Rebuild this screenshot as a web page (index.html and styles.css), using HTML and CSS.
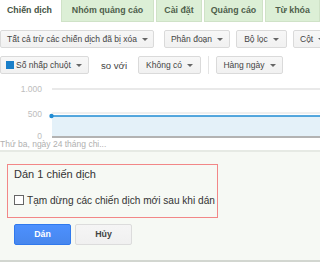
FILE: index.html
```html
<!DOCTYPE html>
<html>
<head>
<meta charset="utf-8">
<link rel="stylesheet" href="styles.css">
</head>
<body>
<div class="tabs">
  <div class="tab active t1">Chiến dịch</div>
  <div class="tab t2">Nhóm quảng cáo</div>
  <div class="tab t3">Cài đặt</div>
  <div class="tab t4">Quảng cáo</div>
  <div class="tab t5">Từ khóa</div>
  <div class="tab t6"></div>
</div>
<div class="toolbar r1">
  <div class="btn b-all">Tất cả trừ các chiến dịch đã bị xóa<span class="caret"></span></div>
  <div class="btn b-seg">Phân đoạn<span class="caret"></span></div>
  <div class="btn b-filter">Bộ lọc<span class="caret"></span></div>
  <div class="btn b-col">Cột<span class="caret"></span></div>
</div>
<div class="toolbar r2">
  <div class="btn b-metric"><span class="swatch"></span>Số nhấp chuột<span class="caret"></span></div>
  <div class="vs">so với</div>
  <div class="btn b-none">Không có<span class="caret"></span></div>
  <div class="sep"></div>
  <div class="btn b-daily">Hàng ngày<span class="caret"></span></div>
</div>
<svg class="chart" width="320" height="56" viewBox="0 0 320 56">
  <line x1="52" y1="5" x2="320" y2="5" stroke="#e2e2e2" stroke-width="1.5"/>
  <text x="42" y="8" text-anchor="end" class="lbl">1.000</text>
  <line x1="52" y1="29" x2="320" y2="29" stroke="#e0e0e0" stroke-width="1.2"/>
  <rect x="52" y="32" width="268" height="20" fill="#e4f1f9"/>
  <line x1="52" y1="32" x2="320" y2="32" stroke="#1f8bd3" stroke-width="1.6"/>
  <circle cx="51.5" cy="32" r="2.2" fill="#1f8bd3"/>
  <rect x="52" y="52" width="268" height="2" fill="#b3b3b3"/>
  <text x="42" y="33" text-anchor="end" class="lbl">500</text>
  <text x="42" y="54.5" text-anchor="end" class="lbl">0</text>
</svg>
<div class="date">Thứ ba, ngày 24 tháng chi...</div>
<div class="panel">
  <div class="box">
    <div class="title">Dán 1 chiến dịch</div>
    <label class="check"><span class="cb"></span>Tạm dừng các chiến dịch mới sau khi dán</label>
  </div>
  <div class="actions">
    <div class="abtn primary">Dán</div>
    <div class="abtn">Hủy</div>
  </div>
</div>
</body>
</html>
```
FILE: styles.css
```css
html, body {
  margin: 0;
  padding: 0;
  background: #ffffff;
  width: 320px;
  height: 264px;
  overflow: hidden;
  font-family: "Liberation Sans", Arial, sans-serif;
}

.tabs {
  display: flex;
  height: 22px;
  white-space: nowrap;
  overflow: hidden;
}

.tab {
  box-sizing: border-box;
  height: 22px;
  line-height: 21px;
  font-size: 8.8px;
  font-weight: bold;
  color: #4f5f4c;
  text-align: center;
  background: #dcefd6;
  border: 1px solid #cfe2c7;
  border-top: none;
  margin-left: 2px;
  flex: none;
}

.tab.active {
  background: #ffffff;
  border: none;
  color: #455445;
  margin-left: 0;
}

.t1 { width: 59px; }
.t2 { width: 93px; }
.t3 { width: 46px; }
.t4 { width: 59px; }
.t5 { width: 55px; }
.t6 { width: 20px; }

.toolbar {
  display: flex;
  align-items: center;
  height: 18px;
  margin-top: 8px;
  white-space: nowrap;
  overflow: hidden;
}

.btn {
  box-sizing: border-box;
  height: 18px;
  line-height: 16px;
  font-size: 8.5px;
  color: #444;
  background: linear-gradient(#f7f7f7, #f1f1f1);
  border: 1px solid #dadada;
  border-radius: 2px;
  padding: 0 6px;
  display: flex;
  align-items: center;
  flex: none;
}

.caret {
  display: inline-block;
  width: 0;
  height: 0;
  border-left: 3px solid transparent;
  border-right: 3px solid transparent;
  border-top: 3px solid #666;
  margin-left: 5px;
  margin-top: 1px;
}

.b-all { width: 154px; }
.b-seg { width: 66px; margin-left: 10px; justify-content: center; }
.b-filter { width: 51px; margin-left: 6px; justify-content: center; }
.b-col { width: 40px; margin-left: 6px; }

.b-metric { width: 89px; padding-left: 5px; }
.swatch {
  display: inline-block;
  width: 8px;
  height: 8px;
  background: #1a7fc9;
  margin-right: 2px;
}
.vs {
  font-size: 9.6px;
  color: #444;
  margin-left: 12px;
  width: 37px;
}
.b-none { width: 63px; justify-content: center; }
.sep {
  width: 1px;
  height: 18px;
  background: #e4e4e4;
  margin-left: 7px;
}
.b-daily { width: 67px; margin-left: 7px; justify-content: center; }

.chart {
  display: block;
  margin-top: 10px;
}

.lbl {
  font-family: "Liberation Sans", Arial, sans-serif;
  font-size: 8.5px;
  fill: #bdbdbd;
}

.date {
  height: 9px;
  line-height: 9px;
  font-size: 8.5px;
  color: #b0b0b0;
  white-space: nowrap;
}

.panel {
  box-sizing: border-box;
  margin-top: 1px;
  height: 112px;
  background: #f6f9f4;
  border-top: 2px solid #e6eae4;
  border-bottom: 2px solid #d2d6d0;
  padding-top: 12px;
  padding-left: 7px;
}

.box {
  box-sizing: border-box;
  width: 211px;
  height: 54px;
  border: 1.5px solid #f28787;
  padding: 2px 0 0 6px;
}

.title {
  font-size: 11px;
  line-height: 14px;
  color: #333;
  margin-bottom: 12px;
}

.check {
  display: flex;
  align-items: center;
  height: 14px;
  font-size: 10.1px;
  color: #333;
  white-space: nowrap;
}

.cb {
  box-sizing: border-box;
  width: 10px;
  height: 10px;
  border: 1px solid #666;
  background: #fff;
  margin-right: 3px;
  flex: none;
}

.actions {
  display: flex;
  margin-top: 6px;
  margin-left: 7px;
  gap: 4px;
}

.abtn {
  box-sizing: border-box;
  width: 57px;
  height: 21px;
  line-height: 19px;
  text-align: center;
  font-size: 8.8px;
  font-weight: bold;
  color: #444;
  background: linear-gradient(#f5f5f5, #f0f0f0);
  border: 1px solid #dcdcdc;
  border-radius: 2px;
}

.abtn.primary {
  color: #fff;
  background: linear-gradient(#4d90fe, #4787ed);
  border: 1px solid #3079ed;
}
```
